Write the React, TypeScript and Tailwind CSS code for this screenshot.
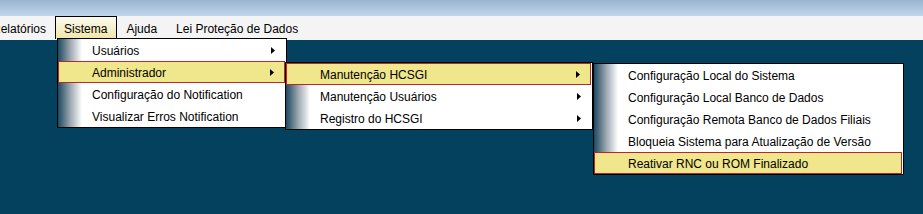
import React from "react";

type Item = { label: string; sub?: boolean; active?: boolean };

const sistemaItems: Item[] = [
  { label: "Usuários", sub: true },
  { label: "Administrador", sub: true, active: true },
  { label: "Configuração do Notification" },
  { label: "Visualizar Erros Notification" },
];

const adminItems: Item[] = [
  { label: "Manutenção HCSGI", sub: true, active: true },
  { label: "Manutenção Usuários", sub: true },
  { label: "Registro do HCSGI", sub: true },
];

const hcsgiItems: Item[] = [
  { label: "Configuração Local do Sistema" },
  { label: "Configuração Local Banco de Dados" },
  { label: "Configuração Remota Banco de Dados Filiais" },
  { label: "Bloqueia Sistema para Atualização de Versão" },
  { label: "Reativar RNC ou ROM Finalizado", active: true },
];

function Arrow() {
  return (
    <svg width="4" height="7" viewBox="0 0 4 7" className="shrink-0">
      <polygon points="0,0 4,3.5 0,7" fill="#000" />
    </svg>
  );
}

function MenuRow({ item }: { item: Item }) {
  if (item.active) {
    return (
      <div className="flex h-[22px] items-center mr-[1px] bg-[#f0e68c] border border-[#b8272a] pl-[33px] pr-[10px] pt-[1px]">
        <span className="flex-1 whitespace-nowrap">{item.label}</span>
        {item.sub && <Arrow />}
      </div>
    );
  }
  return (
    <div className="flex h-[22px] items-center">
      <div className="w-[24px] h-full bg-gradient-to-r from-[#1d4961] via-[#9aa6ae] to-white" />
      <span className="flex-1 whitespace-nowrap pl-[10px] pt-[1px]">{item.label}</span>
      {item.sub && (
        <div className="pr-[11px]">
          <Arrow />
        </div>
      )}
    </div>
  );
}

function Menu({ items, className }: { items: Item[]; className: string }) {
  return (
    <div className={"absolute bg-white border border-black " + className}>
      {items.map((it) => (
        <MenuRow key={it.label} item={it} />
      ))}
    </div>
  );
}

export default function App() {
  return (
    <div className="relative w-[923px] h-[214px] overflow-hidden bg-[#04415f] text-[12px] text-black font-['Liberation_Sans',Arial,sans-serif]">
      <div className="h-[16px] bg-gradient-to-b from-[#9ab4d1] to-[#c2d6ea]" />
      <div className="h-[24px] bg-[#f4f4f4] flex items-start">
        <div className="h-[23px] flex items-center pt-[2px] px-[9px] ml-[-17px]">Relatórios</div>
        <div className="h-[23px] flex items-center pt-[2px] pl-[8px] pr-[9px] border border-black border-b-0 bg-gradient-to-b from-[#fbfaf0] to-[#efe6a4]">
          Sistema
        </div>
        <div className="h-[23px] flex items-center pt-[2px] px-[9px]">Ajuda</div>
        <div className="h-[23px] flex items-center pt-[2px] px-[10px]">Lei Proteção de Dados</div>
      </div>

      <Menu items={sistemaItems} className="left-[57px] top-[38px] w-[230px]" />
      <Menu items={adminItems} className="left-[285px] top-[62px] w-[308px]" />
      <Menu items={hcsgiItems} className="left-[593px] top-[63px] w-[311px]" />
    </div>
  );
}
